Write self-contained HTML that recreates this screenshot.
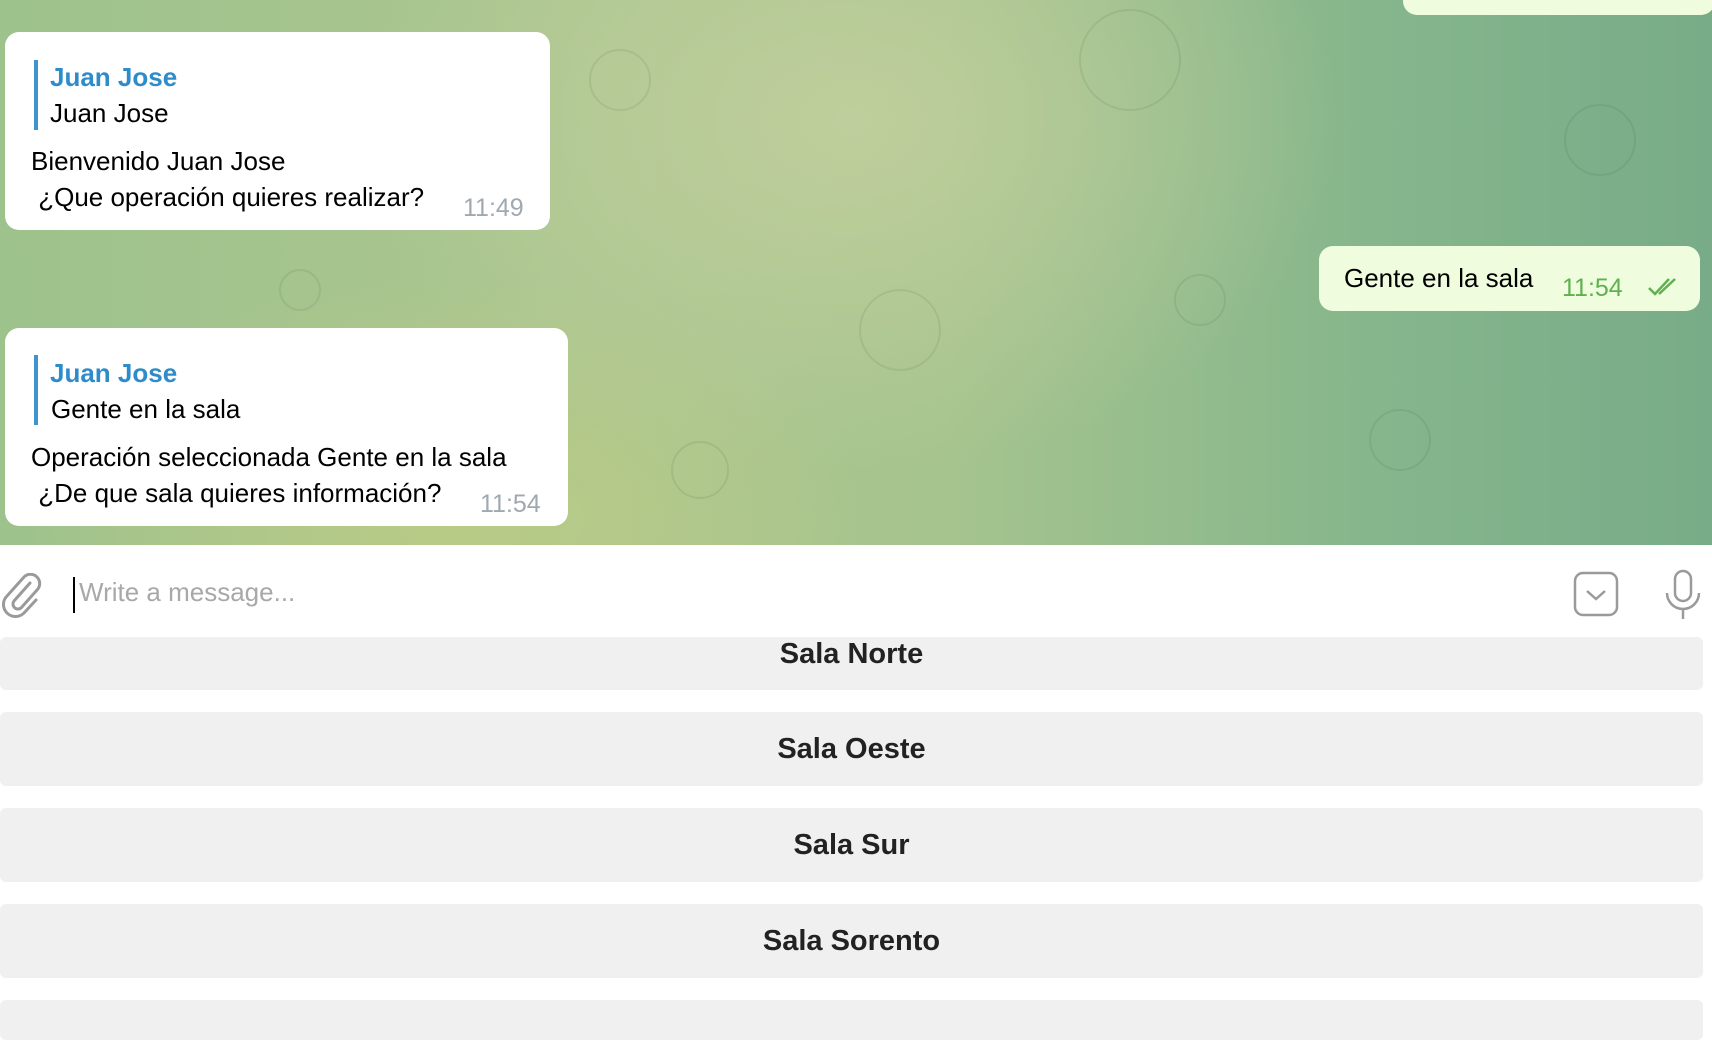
<!DOCTYPE html>
<html><head><meta charset="utf-8">
<style>
*{margin:0;padding:0;box-sizing:border-box}
body{width:1712px;height:1020px;overflow:hidden;background:#fff;font-family:"Liberation Sans","DejaVu Sans",sans-serif;position:relative}
.chat{position:absolute;left:0;top:0;width:1712px;height:545px;
background:radial-gradient(ellipse 700px 500px at 850px 120px,rgba(195,208,158,.85),transparent 70%),
radial-gradient(ellipse 600px 350px at 450px 520px,rgba(188,204,132,.85),transparent 70%),
linear-gradient(90deg,#9ec28c 0%,#acc690 35%,#a6c48e 55%,#86b68c 80%,#78ac88 100%);}
.b{position:absolute;background:#fff;border-radius:14px;color:#000;font-size:26px}
.q{position:absolute;left:29px;width:4px;background:#3d94d0}
.n{position:absolute;color:#2f8ccb;font-size:26px;font-weight:600}
.t{position:absolute;white-space:nowrap}
.tm{position:absolute;color:#a0a8b0;font-size:25px}
.o{position:absolute;background:#effdde;border-radius:14px;font-size:26px}
.in{position:absolute;top:545px;left:0;width:1712px;height:92px;background:#fff}
.btn{position:absolute;left:0;width:1703px;background:#f0f0f0;border-radius:6px;font-size:29px;font-weight:bold;color:#222;text-align:center}
</style></head><body>
<div class="chat">
 <svg width="1712" height="545" style="position:absolute;left:0;top:0;opacity:.1" fill="none" stroke="#335533" stroke-width="2">
  <circle cx="620" cy="80" r="30"/><circle cx="1130" cy="60" r="50"/><circle cx="1400" cy="440" r="30"/><circle cx="700" cy="470" r="28"/>
  <circle cx="900" cy="330" r="40"/><circle cx="1200" cy="300" r="25"/><circle cx="300" cy="290" r="20"/><circle cx="1600" cy="140" r="35"/>
 </svg>
 <div class="o" style="left:1403px;top:-20px;width:312px;height:35px"></div>
 <div class="b" style="left:5px;top:32px;width:545px;height:198px">
  <div class="q" style="top:28px;height:70px"></div>
  <div class="n" style="left:45px;top:30px">Juan Jose</div>
  <div class="t" style="left:45px;top:66px">Juan Jose</div>
  <div class="t" style="left:26px;top:114px">Bienvenido Juan Jose</div>
  <div class="t" style="left:26px;top:150px">&nbsp;¿Que operación quieres realizar?</div>
  <div class="tm" style="left:458px;top:162px">11:49</div>
 </div>
 <div class="b" style="left:5px;top:328px;width:563px;height:198px">
  <div class="q" style="top:27px;height:70px"></div>
  <div class="n" style="left:45px;top:30px">Juan Jose</div>
  <div class="t" style="left:46px;top:66px">Gente en la sala</div>
  <div class="t" style="left:26px;top:114px">Operación seleccionada Gente en la sala</div>
  <div class="t" style="left:26px;top:150px">&nbsp;¿De que sala quieres información?</div>
  <div class="tm" style="left:475px;top:162px">11:54</div>
 </div>
 <div class="o" style="left:1319px;top:246px;width:381px;height:65px">
  <div class="t" style="left:25px;top:17px">Gente en la sala</div>
  <div class="tm" style="left:243px;top:28px;color:#5fb050">11:54</div>
  <svg style="position:absolute;left:328px;top:30px" width="36" height="22" fill="none" stroke="#5fb050" stroke-width="2.5"><path d="M2 12l6 6L22 3M12 18L28 3"/></svg>
 </div>
</div>
<div class="in">
 <svg style="position:absolute;left:2px;top:28px" width="40" height="46" fill="none" stroke="#9a9a9a" stroke-width="3" stroke-linecap="round"><path d="M28 10L12 28a5 5 0 0 0 7 7l16-18a9 9 0 0 0-13-13L5 23a12 12 0 0 0 17 17l12-13"/></svg>
 <div style="position:absolute;left:73px;top:32px;width:2px;height:36px;background:#000"></div>
 <div style="position:absolute;left:79px;top:32px;font-size:26px;color:#a8a8a8">Write a message...</div>
 <svg style="position:absolute;left:1573px;top:26px" width="46" height="46" fill="none" stroke="#9a9a9a" stroke-width="2.5"><rect x="2" y="2" width="42" height="42" rx="8"/><path d="M14 20l9 8 9-8"/></svg>
 <svg style="position:absolute;left:1664px;top:24px" width="40" height="52" fill="none" stroke="#9a9a9a" stroke-width="2.5"><rect x="11" y="2" width="16" height="30" rx="8"/><path d="M3 24a16 16 0 0 0 32 0M19 40v10"/></svg>
</div>
<div class="btn" style="top:637px;height:53px;line-height:34px">Sala Norte</div>
<div class="btn" style="top:712px;height:74px;line-height:74px">Sala Oeste</div>
<div class="btn" style="top:808px;height:74px;line-height:74px">Sala Sur</div>
<div class="btn" style="top:904px;height:74px;line-height:74px">Sala Sorento</div>
<div class="btn" style="top:1000px;height:40px"></div>
</body></html>
